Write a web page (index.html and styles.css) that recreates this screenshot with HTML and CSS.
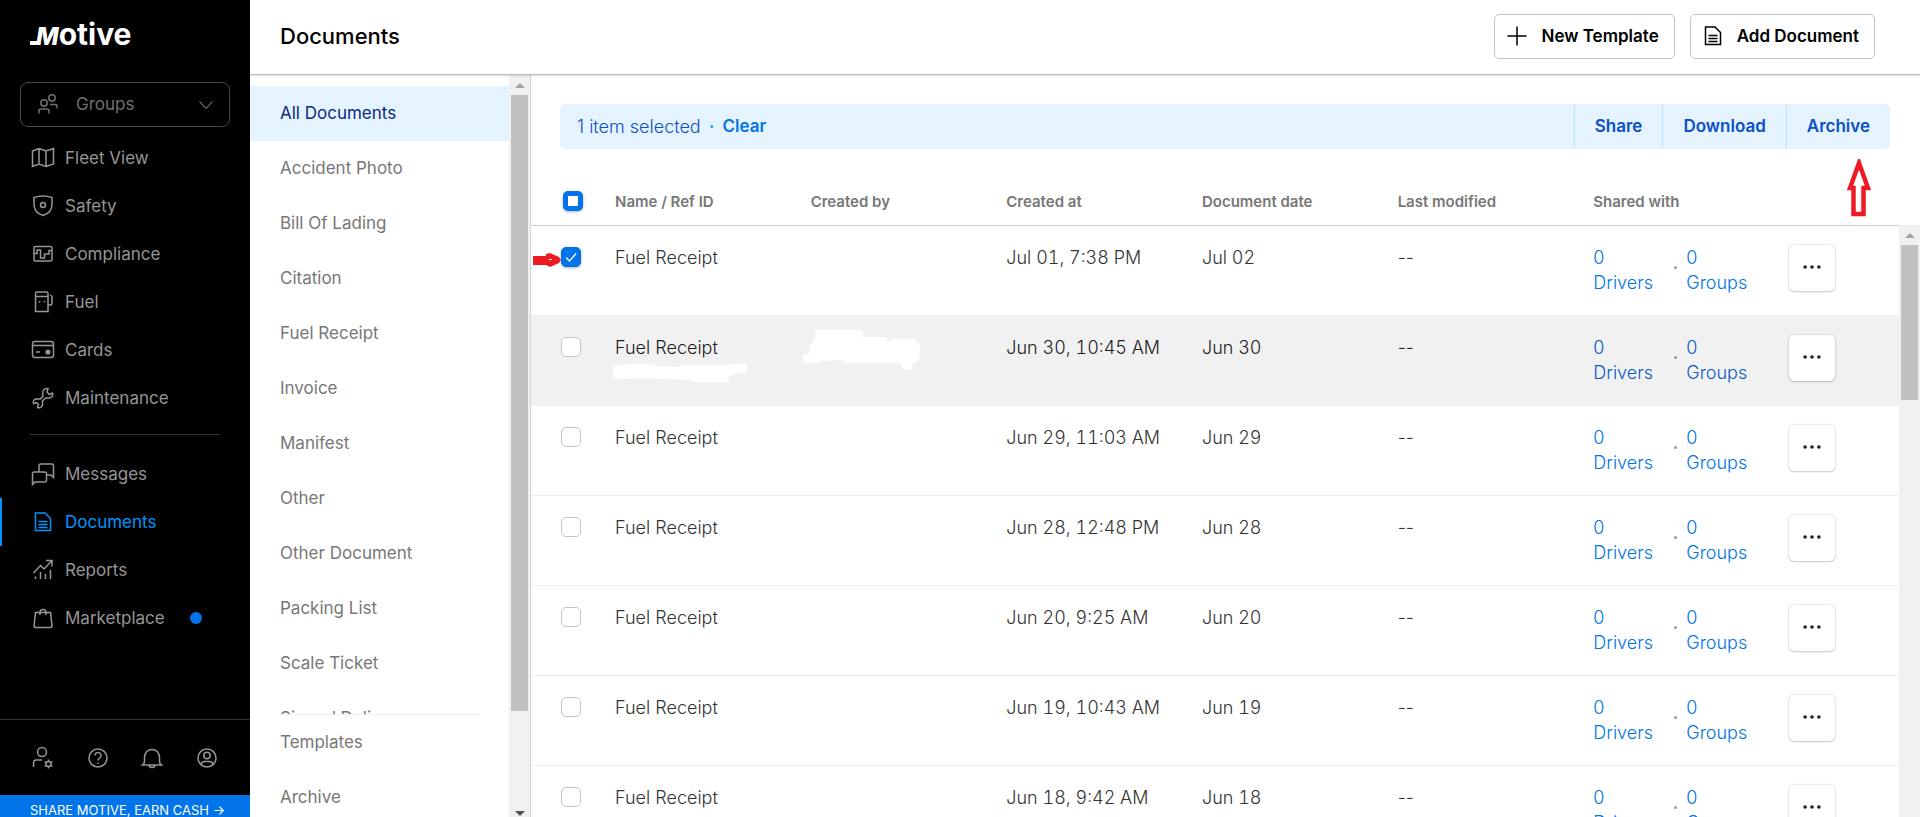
FILE: index.html
```html
<!DOCTYPE html>
<html lang="en">
  <head>
    <meta charset="UTF-8" />
    <meta name="viewport" content="width=device-width, initial-scale=1.0" />
    <title>Documents</title>
    <link rel="stylesheet" href="styles.css">
  </head>
  <body>
    <!-- shared icons -->
    <svg class="icon-defs" width="0" height="0">
      <symbol id="icon-doc" viewBox="0 0 24 24">
        <path d="M4.500 3H14L19.500 8.500V20.500H4.500Z" />
        <path d="M7.500 11.500h9M7.500 14.500h9M7.500 17.500h9" />
      </symbol>
      <symbol id="icon-more" viewBox="0 0 24 24">
        <circle cx="4.500" cy="12" r="2" /><circle cx="12" cy="12" r="2" /><circle cx="19.500" cy="12" r="2" />
      </symbol>
    </svg>

    <div class="app">
      <aside class="sidebar">
        <a class="logo" href="#" aria-label="Motive"><span class="logo-m">M</span>otive</a>

        <button class="groups">
          <svg class="icon" viewBox="0 0 24 24">
            <circle cx="8" cy="10" r="3.200" /><circle cx="16" cy="5" r="3.200" />
            <path d="M3 20.500V18a2 2 0 0 1 2-2h6a2 2 0 0 1 2 2v2.500M14 11.500h5.500a1.500 1.500 0 0 1 1.500 1.500v2.500" />
          </svg>
          <span>Groups</span>
          <svg class="chevron" viewBox="0 0 16 16"><path d="M1.500 4.500L8 11.500L14.500 4.500" /></svg>
        </button>

        <nav class="nav">
          <a class="nav-item" href="#">
            <svg class="icon" viewBox="0 0 24 24"><path d="M1.500 5L8 2.500L15 5L22.500 2.500V18L15 20.500L8 18L1.500 20.500ZM8 2.500V18M15 5V20.500" /></svg>
            Fleet View
          </a>
          <a class="nav-item" href="#">
            <svg class="icon" viewBox="0 0 24 24"><path d="M3 3.500Q12 .5 21 3.500V10C21 16 17 20 12 21.500C7 20 3 16 3 10Z" /><circle cx="12" cy="11" r="2.500" /></svg>
            Safety
          </a>
          <a class="nav-item" href="#">
            <svg class="icon" viewBox="0 0 24 24"><rect x="3" y="4.500" width="18" height="14.500" rx="1.500" /><path d="M3 11.500H6V8H9.500V16H13.500V12H18V8.500H21" /></svg>
            Compliance
          </a>
          <a class="nav-item" href="#">
            <svg class="icon" viewBox="0 0 24 24"><path d="M4.500 21.500V3.500a1.500 1.500 0 0 1 1.500-1.500H15.500a1.500 1.500 0 0 1 1.500 1.500V21.500ZM4.500 6.500H17M17 15H19.500a1.500 1.500 0 0 0 1.500-1.500V6.500L19 5" /><path d="M8.500 11v1.500M13.500 11v1.500" /></svg>
            Fuel
          </a>
          <a class="nav-item" href="#">
            <svg class="icon" viewBox="0 0 24 24"><rect x="1.500" y="3.500" width="21" height="16" rx="2.500" /><path d="M1.500 7.500H22.500M5 14H9" /><circle class="solid" cx="17" cy="14" r="1.800" /></svg>
            Cards
          </a>
          <a class="nav-item" href="#">
            <svg class="icon" viewBox="0 0 24 24"><path d="M17 2.500C13.500 2 11 4.500 11.800 8V10.500L9.500 13H6.500C3.500 12.500 1.500 15 2.500 17.500L5.500 16.500L7.500 18.500L6.500 21.500C9.500 22.500 12 20.500 11.500 17.500V15L14.500 12H17C20.500 12.500 22.500 9.500 21.500 7L18.500 8.500L16 6Z" /></svg>
            Maintenance
          </a>
        </nav>

        <nav class="nav nav-lower">
          <a class="nav-item" href="#">
            <svg class="icon" viewBox="0 0 24 24"><path d="M1.500 22.500V11.500a1.500 1.500 0 0 1 1.500-1.500H14a1.500 1.500 0 0 1 1.500 1.500V18.500a1.500 1.500 0 0 1-1.500 1.500H4ZM8 10V3.500a1.500 1.500 0 0 1 1.500-1.500H21a1.500 1.500 0 0 1 1.500 1.500V15.500L20 13H15.500" /></svg>
            Messages
          </a>
          <a class="nav-item active" href="#">
            <svg class="icon"><use href="#icon-doc" /></svg>
            Documents
          </a>
          <a class="nav-item" href="#">
            <svg class="icon" viewBox="0 0 24 24"><path d="M2.500 15L9.500 7.500L13 11L20.500 3M15 2.500H21V8.500M4.500 18.500V21M9.500 14V21M14.500 16V21M19.500 12V21" /></svg>
            Reports
          </a>
          <a class="nav-item" href="#">
            <svg class="icon" viewBox="0 0 24 24"><path d="M4.500 6.500H19.500L21 20a1.500 1.500 0 0 1-1.500 1.500H4.500a1.500 1.500 0 0 1-1.500-1.500ZM9 9V6.500a3 3 0 0 1 6 0V9" /></svg>
            Marketplace
            <span class="new-dot"></span>
          </a>
        </nav>

        <div class="sidebar-tools">
          <button aria-label="Admin">
            <svg class="icon" viewBox="0 0 24 24"><circle cx="11" cy="6" r="4.500" /><path d="M2.500 21V17a3 3 0 0 1 3-3H11" /><circle cx="17.500" cy="18" r="2.500" /><path d="M17.500 13.500v2M17.500 20.500v2M13.600 15.700l1.800 1M19.700 19.300l1.800 1M13.600 20.300l1.800-1M19.700 16.700l1.800-1" /></svg>
          </button>
          <button aria-label="Help">
            <svg class="icon" viewBox="0 0 24 24"><circle cx="12" cy="12" r="9" /><path d="M9 9.500a3 3 0 1 1 4.500 2.600c-1 .6-1.500 1-1.500 2.400M12 16.500v1.500" /></svg>
          </button>
          <button aria-label="Notifications">
            <svg class="icon" viewBox="0 0 24 24"><path d="M2.500 19Q4.500 17.500 4.500 15.500V11a7.500 7.500 0 0 1 15 0V15.500Q19.500 17.500 21.500 19ZM9 19a3 2.500 0 0 0 6 0" /></svg>
          </button>
          <button aria-label="Account">
            <svg class="icon" viewBox="0 0 24 24"><circle cx="12" cy="12" r="9" /><circle cx="12" cy="9.500" r="3.200" /><path d="M6 18.500c.5-2.500 2-3 3.500-3h5c1.500 0 3 .5 3.500 3" /></svg>
          </button>
        </div>
        <a class="share-bar" href="#">SHARE MOTIVE, EARN CASH →</a>
      </aside>

      <div class="page">
        <header class="header">
          <h1>Documents</h1>
          <button class="header-button">
            <svg class="icon" viewBox="0 0 24 24"><path d="M12 2.500V21.500M2.500 12H21.500" /></svg>
            New Template
          </button>
          <button class="header-button">
            <svg class="icon"><use href="#icon-doc" /></svg>
            Add Document
          </button>
        </header>

        <div class="content">
          <div class="categories">
            <nav class="category-list">
              <a class="category current" href="#">All Documents</a>
              <a class="category" href="#">Accident Photo</a>
              <a class="category" href="#">Bill Of Lading</a>
              <a class="category" href="#">Citation</a>
              <a class="category" href="#">Fuel Receipt</a>
              <a class="category" href="#">Invoice</a>
              <a class="category" href="#">Manifest</a>
              <a class="category" href="#">Other</a>
              <a class="category" href="#">Other Document</a>
              <a class="category" href="#">Packing List</a>
              <a class="category" href="#">Scale Ticket</a>
              <a class="category" href="#">Signed Delivery</a>
            </nav>
            <nav class="category-fixed">
              <a class="category" href="#">Templates</a>
              <a class="category" href="#">Archive</a>
            </nav>
          </div>
          <div class="scrollbar">
            <span class="arrow-up"></span>
            <span class="thumb thumb-long"></span>
            <span class="arrow-down"></span>
          </div>

          <main class="main">
            <div class="selection">
              <span>1 item selected</span>
              <span class="selection-dot">·</span>
              <button class="clear">Clear</button>
              <div class="selection-actions">
                <button>Share</button>
                <button>Download</button>
                <button>Archive</button>
              </div>
            </div>

            <div class="table-area">
              <div class="table-wrap">
                <table class="documents">
                  <colgroup>
                    <col class="col-check"><col><col><col><col><col><col><col class="col-menu">
                  </colgroup>
                  <thead>
                    <tr>
                      <th><input type="checkbox" class="check check-all" aria-label="Select all"></th>
                      <th>Name / Ref ID</th>
                      <th>Created by</th>
                      <th>Created at</th>
                      <th>Document date</th>
                      <th>Last modified</th>
                      <th>Shared with</th>
                      <th>
                        <svg class="mark mark-up" viewBox="0 0 24 58"><path d="M12 4L3 29H6.500V55H16.500V29H21Z" /></svg>
                      </th>
                    </tr>
                  </thead>
                  <tbody>
                    <tr>
                      <td>
                        <svg class="mark mark-right" viewBox="0 0 28 14"><path d="M0 3H13V1L17 0L26 4L28 7L26 10L17 14L13 12H0Z" /><rect x="16" y="6" width="3" height="1" /></svg>
                        <input type="checkbox" class="check" aria-label="Select Jul 02" checked>
                      </td>
                      <td>Fuel Receipt</td>
                      <td></td>
                      <td class="date">Jul 01, 7:38 PM</td>
                      <td class="date">Jul 02</td>
                      <td>--</td>
                      <td><div class="shared"><a href="#">0 Drivers</a><i></i><a href="#">0 Groups</a></div></td>
                      <td><button class="more" aria-label="More"><svg><use href="#icon-more" /></svg></button></td>
                    </tr>
                    <tr class="hovered">
                      <td><input type="checkbox" class="check" aria-label="Select Jun 30"></td>
                      <td>
                        Fuel Receipt
                        <svg class="blank blank-ref" viewBox="0 0 134 18"><path d="M0 1H12L14 0H37L44 2L67 3L69 1H115L121 0H134V8L122 10L116 12V18H80L78 16L32 14L0 15Z" /></svg>
                      </td>
                      <td>
                        <svg class="blank blank-name" viewBox="0 0 117 40"><path d="M0 25L6 24L7 15L12 8V0H55L60 2V7H83L84 12L90 9H112L117 15L116 30L110 33L109 40H100L98 33H42L40 30L20 31L15 33H0Z" /></svg>
                      </td>
                      <td class="date">Jun 30, 10:45 AM</td>
                      <td class="date">Jun 30</td>
                      <td>--</td>
                      <td><div class="shared"><a href="#">0 Drivers</a><i></i><a href="#">0 Groups</a></div></td>
                      <td><button class="more" aria-label="More"><svg><use href="#icon-more" /></svg></button></td>
                    </tr>
                    <tr>
                      <td><input type="checkbox" class="check" aria-label="Select Jun 29"></td>
                      <td>Fuel Receipt</td>
                      <td></td>
                      <td class="date">Jun 29, 11:03 AM</td>
                      <td class="date">Jun 29</td>
                      <td>--</td>
                      <td><div class="shared"><a href="#">0 Drivers</a><i></i><a href="#">0 Groups</a></div></td>
                      <td><button class="more" aria-label="More"><svg><use href="#icon-more" /></svg></button></td>
                    </tr>
                    <tr>
                      <td><input type="checkbox" class="check" aria-label="Select Jun 28"></td>
                      <td>Fuel Receipt</td>
                      <td></td>
                      <td class="date">Jun 28, 12:48 PM</td>
                      <td class="date">Jun 28</td>
                      <td>--</td>
                      <td><div class="shared"><a href="#">0 Drivers</a><i></i><a href="#">0 Groups</a></div></td>
                      <td><button class="more" aria-label="More"><svg><use href="#icon-more" /></svg></button></td>
                    </tr>
                    <tr>
                      <td><input type="checkbox" class="check" aria-label="Select Jun 20"></td>
                      <td>Fuel Receipt</td>
                      <td></td>
                      <td class="date">Jun 20, 9:25 AM</td>
                      <td class="date">Jun 20</td>
                      <td>--</td>
                      <td><div class="shared"><a href="#">0 Drivers</a><i></i><a href="#">0 Groups</a></div></td>
                      <td><button class="more" aria-label="More"><svg><use href="#icon-more" /></svg></button></td>
                    </tr>
                    <tr>
                      <td><input type="checkbox" class="check" aria-label="Select Jun 19"></td>
                      <td>Fuel Receipt</td>
                      <td></td>
                      <td class="date">Jun 19, 10:43 AM</td>
                      <td class="date">Jun 19</td>
                      <td>--</td>
                      <td><div class="shared"><a href="#">0 Drivers</a><i></i><a href="#">0 Groups</a></div></td>
                      <td><button class="more" aria-label="More"><svg><use href="#icon-more" /></svg></button></td>
                    </tr>
                    <tr>
                      <td><input type="checkbox" class="check" aria-label="Select Jun 18"></td>
                      <td>Fuel Receipt</td>
                      <td></td>
                      <td class="date">Jun 18, 9:42 AM</td>
                      <td class="date">Jun 18</td>
                      <td>--</td>
                      <td><div class="shared"><a href="#">0 Drivers</a><i></i><a href="#">0 Groups</a></div></td>
                      <td><button class="more" aria-label="More"><svg><use href="#icon-more" /></svg></button></td>
                    </tr>
                  </tbody>
                </table>
              </div>
              <div class="scrollbar table-scrollbar">
                <span class="arrow-up"></span>
                <span class="thumb thumb-short"></span>
              </div>
            </div>
          </main>
        </div>
      </div>
    </div>
    <script>
      // part of the rows is selected
      document.querySelector('.check-all').indeterminate = true;
    </script>
  </body>
</html>
```
FILE: styles.css
```css
* {
  box-sizing: border-box;
}

body {
  margin: 0;
  font-family: Inter, "Liberation Sans", sans-serif;
  font-size: 18px;
  font-weight: 300;
  line-height: 25px;
  color: #333;
  background: #fff;
}

button {
  font: inherit;
  color: inherit;
  background: none;
  border: none;
  padding: 0;
  cursor: pointer;
}

a {
  color: inherit;
  text-decoration: none;
}

svg {
  display: block;
}

.icon-defs {
  position: absolute;
}

.icon {
  width: 24px;
  height: 24px;
  flex-shrink: 0;
  fill: none;
  stroke: currentColor;
  stroke-width: 1.5;
}

.icon .solid {
  fill: currentColor;
}

.app {
  display: flex;
  height: 100vh;
  overflow: hidden;
}

/* sidebar */
.sidebar {
  width: 250px;
  flex-shrink: 0;
  display: flex;
  flex-direction: column;
  background: #000;
  color: #969696;
  font-size: 17px;
  font-weight: 400;
}

.logo {
  display: flex;
  align-items: baseline;
  margin: 14px 30px 25px;
  font-size: 30px;
  font-weight: 700;
  line-height: 40px;
  color: #fff;
}

.logo-m {
  font-size: 24px;
  font-style: italic;
  font-weight: 800;
}

.logo-m::before {
  content: "";
  display: inline-block;
  width: 8px;
  height: 4px;
  margin-right: -2px;
  background: #fff;
}

.groups {
  display: flex;
  align-items: center;
  gap: 16px;
  height: 45px;
  margin: 0 20px 7px;
  padding: 0 15px;
  border: 1px solid #4a4a4a;
  border-radius: 8px;
  color: #707070;
  text-align: left;
}

.groups span {
  flex: 1;
}

.chevron {
  width: 16px;
  height: 16px;
  fill: none;
  stroke: #a0a0a0;
}

.nav-item {
  display: flex;
  align-items: center;
  gap: 10px;
  height: 48px;
  padding-left: 31px;
}

.nav-lower::before {
  content: "";
  display: block;
  margin: 12px 30px 15px;
  border-top: 1px solid #333;
}

.nav-item.active {
  padding-left: 29px;
  border-left: 2px solid #0094ff;
  color: #0094ff;
}

.new-dot {
  width: 12px;
  height: 12px;
  margin-left: 15px;
  border-radius: 50%;
  background: #0074e8;
}

.sidebar-tools {
  display: flex;
  justify-content: space-between;
  margin-top: auto;
  padding: 26px 31px 25px;
  border-top: 1px solid #333;
}

.share-bar {
  height: 22px;
  overflow: hidden;
  padding-left: 30px;
  background: #0074e8;
  color: #fff;
  font-size: 13px;
  line-height: 30px;
}

/* header */
.page {
  flex: 1;
  min-width: 0;
  display: flex;
  flex-direction: column;
}

.header {
  display: flex;
  align-items: center;
  gap: 15px;
  height: 75px;
  flex-shrink: 0;
  padding: 0 45px 2px 30px;
  border-bottom: 1px solid #bdbdbd;
  box-shadow: 0 1px 2px rgba(0, 0, 0, 0.15);
  z-index: 1;
}

.header h1 {
  flex: 1;
  margin: 0;
  font-size: 22px;
  font-weight: 500;
  color: #000;
}

.header-button {
  display: flex;
  align-items: center;
  gap: 12px;
  height: 45px;
  padding: 0 15px 0 10px;
  border: 1px solid #c4c4c4;
  border-radius: 5px;
  color: #000;
  font-size: 17px;
  font-weight: 600;
}

/* categories */
.content {
  flex: 1;
  min-height: 0;
  display: flex;
}

.categories {
  width: 259px;
  flex-shrink: 0;
  display: flex;
  flex-direction: column;
  color: #777;
  font-size: 17px;
  font-weight: 400;
  padding-top: 11px;
}

.category-list {
  flex: 1;
  min-height: 0;
  overflow: hidden;
}

.category {
  display: block;
  padding: 15px 30px;
}

.category.current {
  background: #e5f3ff;
  color: #0a2a80;
}

.category-fixed {
  height: 103px;
}

.category-fixed::before {
  content: "";
  display: block;
  margin: 0 30px;
  border-top: 1px solid #eee;
}

.scrollbar {
  width: 21px;
  flex-shrink: 0;
  display: flex;
  flex-direction: column;
  align-items: center;
  background: #f0f0f0;
}

.arrow-up {
  margin: 8px 0 7px;
  border: 5px solid transparent;
  border-top: none;
  border-bottom-color: #a3a3a3;
}

.arrow-down {
  margin: auto 0 1px;
  border: 5px solid transparent;
  border-bottom: none;
  border-top-color: #505050;
}

.thumb {
  width: 17px;
  background: #c1c1c1;
}

.thumb-long {
  height: 83%;
}

.thumb-short {
  height: 155px;
}

/* selection bar */
.main {
  flex: 1;
  min-width: 0;
  border-left: 1px solid #d4d4d4;
  overflow: hidden;
  display: flex;
  flex-direction: column;
}

.selection {
  display: flex;
  align-items: center;
  gap: 8px;
  height: 45px;
  flex-shrink: 0;
  margin: 29px 30px 26px 29px;
  padding-left: 17px;
  border-radius: 5px;
  background: #e5f3ff;
  color: #0a50c8;
}

.selection-dot {
  color: #00a0f0;
  font-weight: 600;
}

.clear {
  color: #0074e8;
  font-size: 17px;
  font-weight: 600;
}

.selection-actions {
  display: flex;
  height: 100%;
  margin-left: auto;
}

.selection-actions button {
  padding: 0 20px;
  border-left: 1px solid #bfe4ff;
  font-size: 17px;
  font-weight: 600;
}

/* table */
.table-area {
  flex: 1;
  min-height: 0;
  display: flex;
}

.table-wrap {
  flex: 1;
  min-width: 0;
}

.documents {
  width: 100%;
  table-layout: fixed;
  border-collapse: collapse;
}

.col-check {
  width: 84px;
}

.col-menu {
  width: 110px;
}

.documents th,
.documents td {
  position: relative;
  padding: 0;
  text-align: left;
}

.documents th {
  height: 50px;
  padding-top: 3px;
  border-bottom: 1px solid #ccc;
  color: #777;
  font-size: 15px;
  font-weight: 600;
}

.documents td {
  height: 90px;
  padding-top: 19px;
  border-bottom: 1px solid #eee;
  vertical-align: top;
}

.documents .date {
  font-variant-numeric: tabular-nums;
}

.hovered {
  background: #f1f1f1;
  color: #1c1c1c;
}

.check {
  appearance: none;
  display: block;
  width: 20px;
  height: 20px;
  margin: 2px 0 0 30px;
  border: 1px solid #c4c4c4;
  border-radius: 5px;
  background: #fff;
}

.check:checked {
  border-color: #0074e8;
  background: #0074e8 url("data:image/svg+xml,%3Csvg xmlns='http://www.w3.org/2000/svg' viewBox='0 0 18 18'%3E%3Cpath d='M4 9.500L7.500 13L14 5.500' fill='none' stroke='white' stroke-width='1.200'/%3E%3C/svg%3E");
  box-shadow: 0 1px 3px rgba(0, 0, 0, 0.3);
}

.check-all {
  margin: 0 0 0 32px;
  border: 5px solid #0074e8;
  box-shadow: 0 1px 3px rgba(0, 0, 0, 0.3);
}

.shared {
  display: flex;
  align-items: center;
  color: #0074e8;
}

.shared a {
  width: 60px;
}

.shared i {
  width: 3px;
  height: 3px;
  margin: 0 9px 4px 21px;
  border-radius: 50%;
  background: #999;
}

.hovered .shared {
  color: #0a5ac8;
}

.more {
  display: flex;
  align-items: center;
  justify-content: center;
  width: 46px;
  height: 46px;
  border-radius: 5px;
  background: #fff;
  box-shadow: 0 0 2px rgba(0, 0, 0, 0.25), 0 1px 2px rgba(0, 0, 0, 0.15);
}

.more svg {
  width: 22px;
  height: 22px;
  margin-bottom: 2px;
  fill: #222;
}

.table-scrollbar {
  margin-top: 50px;
}

/* hand drawn marks over the table */
.mark,
.blank {
  position: absolute;
}

.mark-up {
  left: 58px;
  top: -16px;
  width: 24px;
  height: 58px;
  fill: #fff;
  stroke: #ed1c24;
  stroke-width: 4.5;
}

.mark-right {
  left: 2px;
  top: 27px;
  width: 28px;
  height: 14px;
  fill: #ed1c24;
}

.mark-right rect {
  fill: #fff;
}

.blank {
  fill: #fff;
}

.blank-ref {
  left: -2px;
  top: 48px;
  width: 134px;
  height: 18px;
}

.blank-name {
  left: -8px;
  top: 14px;
  width: 117px;
  height: 40px;
}
```
